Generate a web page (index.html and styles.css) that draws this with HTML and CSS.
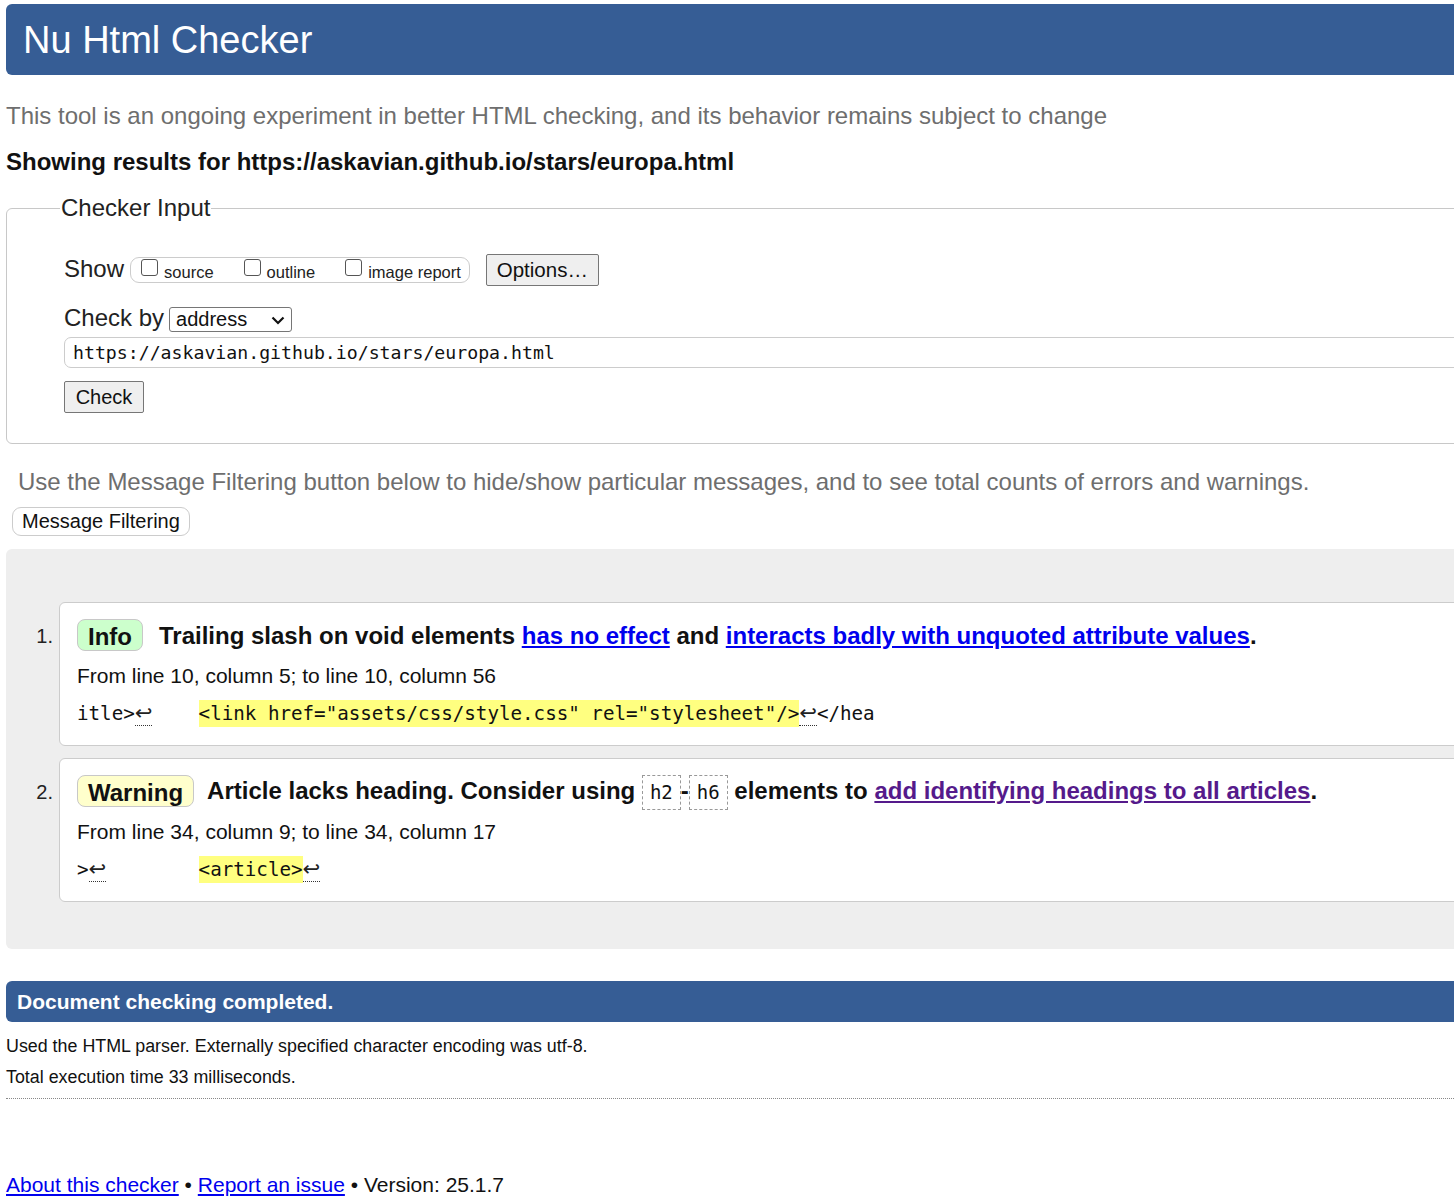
FILE: index.html
```html
<!DOCTYPE html>
<html lang="en">
<head>
<meta charset="utf-8">
<title>Nu Html Checker</title>
<link rel="stylesheet" href="styles.css">
</head>
<body>
<div class="page">
  <h1 class="title">Nu Html Checker</h1>
  <p class="intro">This tool is an ongoing experiment in better HTML checking, and its behavior remains subject to change</p>
  <p class="showing">Showing results for https://askavian.github.io/stars/europa.html</p>

  <fieldset class="input">
    <legend>Checker Input</legend>
    <div class="show-row">
      <span class="big-label">Show</span>
      <span class="opts">
        <label class="opt"><input type="checkbox" class="cb"><span>source</span></label>
        <label class="opt"><input type="checkbox" class="cb"><span>outline</span></label>
        <label class="opt"><input type="checkbox" class="cb"><span>image report</span></label>
      </span>
      <button class="btn btn-options">Options…</button>
    </div>
    <div class="checkby-row">
      <span class="big-label">Check by</span>
      <span class="select-wrap">
        <select class="select"><option>address</option></select>
        <svg class="chev" width="14" height="9" viewBox="0 0 14 9"><path d="M1.5 1.5 L7 7 L12.5 1.5" fill="none" stroke="#111" stroke-width="2.2"/></svg>
      </span>
    </div>
    <input class="url" type="text" value="https://askavian.github.io/stars/europa.html">
    <div><button class="btn btn-check">Check</button></div>
  </fieldset>

  <p class="filter-note">Use the Message Filtering button below to hide/show particular messages, and to see total counts of errors and warnings.</p>
  <button class="filter-btn">Message Filtering</button>

  <div class="results">
    <ol class="msgs">
      <li class="msg">
        <span class="num">1.</span>
        <div class="box">
          <p class="msg-line"><span class="badge badge-info">Info</span><span class="msg-text">Trailing slash on void elements <a href="#" class="lnk">has no effect</a> and <a href="#" class="lnk">interacts badly with unquoted attribute values</a>.</span></p>
          <p class="loc">From line 10, column 5; to line 10, column 56</p>
          <p class="extract"><code>itle&gt;<b class="lf">↩</b>    <b class="hl">&lt;link href="assets/css/style.css" rel="stylesheet"/&gt;</b><b class="lf">↩</b>&lt;/hea</code></p>
        </div>
      </li>
      <li class="msg">
        <span class="num">2.</span>
        <div class="box">
          <p class="msg-line"><span class="badge badge-warn">Warning</span><span class="msg-text">Article lacks heading. Consider using <code class="el">h2</code>-<code class="el">h6</code> elements to <a href="#" class="lnk visited">add identifying headings to all articles</a>.</span></p>
          <p class="loc">From line 34, column 9; to line 34, column 17</p>
          <p class="extract"><code>&gt;<b class="lf">↩</b>        <b class="hl">&lt;article&gt;</b><b class="lf">↩</b></code></p>
        </div>
      </li>
    </ol>
  </div>

  <h2 class="done">Document checking completed.</h2>
  <p class="stat">Used the HTML parser. Externally specified character encoding was utf-8.</p>
  <p class="stat">Total execution time 33 milliseconds.</p>
  <hr class="sep">

  <p class="footer"><a href="#" class="flink">About this checker</a> • <a href="#" class="flink">Report an issue</a> • Version: 25.1.7</p>
</div>
</body>
</html>
```

FILE: styles.css
```css
html, body {
  margin: 0;
  padding: 0;
  overflow: hidden;
  background: #fff;
}

body {
  font-family: "Liberation Sans", Arial, sans-serif;
  color: #111;
}

.page {
  width: 1500px;
  padding: 4px 0 0 6px;
}

.title {
  margin: 0;
  height: 71px;
  line-height: 73px;
  padding-left: 17px;
  background: #365d95;
  color: #fff;
  font-size: 38px;
  font-weight: normal;
  border-radius: 6px 0 0 6px;
}

.intro {
  margin: 27px 0 0;
  line-height: 28px;
  font-size: 24px;
  color: #6e6e6e;
}

.showing {
  margin: 18px 0 0;
  line-height: 28px;
  font-size: 24px;
  font-weight: bold;
  color: #111;
}

.input {
  margin: 18px 0 0;
  padding: 0 0 30px 57px;
  border: 1px solid #c8c8c8;
  border-radius: 6px 0 0 6px;
  min-width: 0;
}

.input legend {
  font-size: 24px;
  line-height: 28px;
  padding: 0 1px;
  margin-left: -4px;
  color: #222;
}

.show-row {
  margin-top: 32px;
  display: flex;
  align-items: center;
  height: 32px;
}

.big-label {
  font-size: 24px;
  color: #222;
  position: relative;
  top: -1px;
}

.opts {
  margin-left: 6px;
  display: inline-flex;
  align-items: center;
  height: 24px;
  padding: 0 8px 0 10px;
  border: 1px solid #ccc;
  border-radius: 9px;
  gap: 30px;
}

.opt {
  display: inline-flex;
  align-items: center;
  font-size: 16.5px;
  color: #222;
}

.opt span {
  margin-top: 5px;
}

.cb {
  appearance: none;
  -webkit-appearance: none;
  width: 17px;
  height: 17px;
  margin: -6px 6px 0 0;
  border: 1.5px solid #555;
  border-radius: 3px;
  background: #fff;
  box-sizing: border-box;
}

.btn {
  font-family: "Liberation Sans", Arial, sans-serif;
  font-size: 20px;
  color: #111;
  background: #efefef;
  border: 1px solid #767676;
  border-radius: 2px;
  padding: 0;
}

.btn-options {
  margin-left: 16px;
  width: 113px;
  height: 32px;
  font-size: 20.5px;
}

.checkby-row {
  margin-top: 19px;
  display: flex;
  align-items: center;
  height: 28px;
}

.select-wrap {
  position: relative;
  margin-left: 5px;
  display: inline-block;
}

.select {
  appearance: none;
  -webkit-appearance: none;
  width: 123px;
  height: 25px;
  padding: 0 0 0 6px;
  font-family: "Liberation Sans", Arial, sans-serif;
  font-size: 20px;
  color: #111;
  background: #fff;
  border: 1px solid #767676;
  border-radius: 3px;
  display: block;
}

.chev {
  position: absolute;
  right: 7px;
  top: 9px;
  pointer-events: none;
}

.url {
  display: block;
  margin-top: 4px;
  width: 1440px;
  height: 31px;
  box-sizing: border-box;
  padding: 0 0 0 8px;
  border: 1px solid #ccc;
  border-radius: 7px;
  font-family: "DejaVu Sans Mono", "Liberation Mono", monospace;
  font-size: 18.2px;
  color: #111;
  outline: none;
}

.btn-check {
  margin-top: 13px;
  width: 80px;
  height: 32px;
}

.filter-note {
  margin: 24px 0 0;
  padding-left: 12px;
  line-height: 28px;
  font-size: 24px;
  color: #6e6e6e;
}

.filter-btn {
  display: block;
  margin: 11px 0 0 6px;
  height: 29px;
  padding: 0 9px;
  font-family: "Liberation Sans", Arial, sans-serif;
  font-size: 20px;
  color: #111;
  background: #fff;
  border: 1px solid #ccc;
  border-radius: 9px;
}

.results {
  margin-top: 13px;
  background: #eee;
  border-radius: 6px 0 0 6px;
  padding: 53px 0 47px 0;
}

.msgs {
  list-style: none;
  margin: 0;
  padding: 0;
  display: flex;
  flex-direction: column;
  gap: 12px;
}

.msg {
  display: flex;
  align-items: flex-start;
}

.num {
  width: 47px;
  text-align: right;
  padding-right: 6px;
  font-size: 20px;
  line-height: 28px;
  margin-top: 20px;
  color: #222;
}

.box {
  flex: 1;
  background: #fff;
  border: 1px solid #ccc;
  border-radius: 6px 0 0 6px;
  padding: 15px 0 16px 17px;
}

.msg-line {
  margin: 0;
  display: flex;
  align-items: center;
  height: 34px;
  font-size: 24px;
  font-weight: bold;
  color: #111;
  white-space: nowrap;
}

.msg-text {
  position: relative;
  top: 1px;
}

.badge {
  display: inline-block;
  height: 32px;
  line-height: 33px;
  box-sizing: border-box;
  padding: 0 10px;
  border: 1px solid #c8c8c8;
  border-radius: 8px;
  margin-right: 16px;
}

.badge-info {
  background: #ccffcc;
}

.badge-warn {
  background: #ffffcc;
  margin-right: 13px;
}

.lnk {
  color: #0000ee;
  text-decoration: underline;
}

.lnk.visited {
  color: #551a8b;
}

.el {
  display: inline-block;
  font-family: "DejaVu Sans Mono", "Liberation Mono", monospace;
  font-weight: normal;
  font-size: 19px;
  line-height: 33px;
  padding: 0 7px;
  border: 1px dashed #999;
  margin: 0;
}

.loc {
  margin: 10px 0 0;
  line-height: 28px;
  font-size: 21px;
  color: #111;
}

.extract {
  margin: 9px 0 0;
  line-height: 28px;
}

.extract code {
  white-space: pre;
  font-family: "DejaVu Sans Mono", "Liberation Mono", monospace;
  font-size: 19.2px;
  color: #111;
}

.extract b {
  font-weight: normal;
}

.hl {
  background: #ffff80;
  padding: 2px 0;
}

.lf {
  font-family: "DejaVu Sans", sans-serif;
  font-size: 21px;
  border-bottom: 1px dotted #333;
  color: #222;
}

.done {
  margin: 32px 0 0;
  height: 41px;
  line-height: 41px;
  padding-left: 11px;
  background: #365d95;
  color: #fff;
  font-size: 21px;
  font-weight: bold;
  border-radius: 6px 0 0 6px;
}

.stat {
  margin: 14px 0 0;
  line-height: 21px;
  font-size: 17.85px;
  color: #111;
}

.stat + .stat {
  margin-top: 10px;
}

.sep {
  margin: 10px 0 0;
  border: 0;
  border-top: 1px dotted #888;
  height: 0;
}

.footer {
  margin: 72px 0 0;
  line-height: 28px;
  font-size: 21px;
  color: #111;
}

.flink {
  color: #0000ee;
  text-decoration: underline;
}
```
